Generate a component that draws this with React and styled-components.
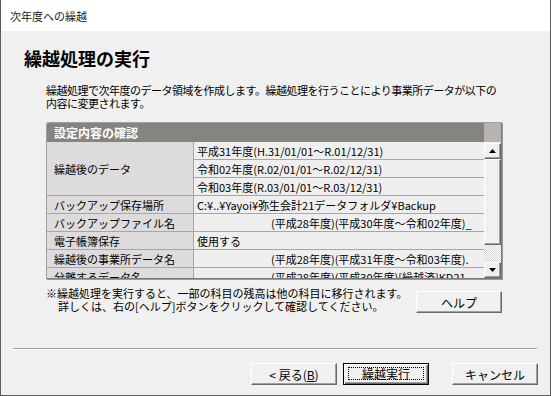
import React from 'react';
import styled, { createGlobalStyle } from 'styled-components';

const GlobalStyle = createGlobalStyle`
  html, body {
    margin: 0;
    padding: 0;
    background: #f0f0f0;
  }
  body {
    font-family: "Noto Sans CJK JP", "Noto Sans", sans-serif;
    color: #000;
    overflow: hidden;
  }
`;

const Window = styled.div`
  width: 551px;
  height: 396px;
  box-sizing: border-box;
  border: 1px solid #5c5c5c;
  border-top: none;
  background: #f0f0f0;
  display: flex;
  flex-direction: column;
`;

const TitleBar = styled.div`
  height: 31px;
  flex: none;
  background: #fff;
  display: flex;
  align-items: center;
  padding-left: 9px;
  font-size: 11px;
  color: #1a1a1a;
`;

const Heading = styled.h1`
  margin: 15px 0 0 23px;
  font-size: 18px;
  line-height: 24px;
  font-weight: bold;
`;

const Section = styled.div`
  margin-left: 45px;
  width: 456px;
`;

const Lead = styled.p`
  margin: 14px 0 0;
  font-size: 11px;
  line-height: 13px;
  letter-spacing: -0.5px;
  white-space: nowrap;
`;

const Frame = styled.div`
  margin-top: 12px;
  border: 1px solid #a0a0a0;
  border-right-color: #7c7c7c;
  border-bottom-color: #7c7c7c;
  border-top-left-radius: 3px;
  box-shadow: 1px 1px 0 #9a9a9a;
  overflow: hidden;
`;

const FrameHeader = styled.div`
  height: 19px;
  display: flex;
`;

const HeaderTitle = styled.div`
  flex: 1;
  background: #86847f;
  color: #fff;
  font-size: 12px;
  font-weight: bold;
  display: flex;
  align-items: center;
  padding-left: 7px;
`;

const HeaderCorner = styled.div`
  width: 17px;
  background: #b7b4af;
`;

const FrameBody = styled.div`
  height: 136px;
  display: flex;
  overflow: hidden;
`;

const Grid = styled.div`
  flex: 1;
  display: grid;
  grid-template-columns: 147px 1fr;
  grid-auto-rows: 18px;
  align-content: start;
  font-size: 11px;
`;

const LabelCell = styled.div`
  grid-row: span ${p => p.$span || 1};
  background: #dddbdb;
  border-right: 1px solid #a6a6a6;
  border-bottom: 1px solid #a6a6a6;
  display: flex;
  align-items: center;
  padding-left: 7px;
  white-space: nowrap;
`;

const ValueCell = styled.div`
  background: #efefef;
  border-bottom: 1px solid #a6a6a6;
  display: flex;
  align-items: center;
  padding-left: ${p => (p.$indent ? '77px' : '3px')};
  white-space: nowrap;
  overflow: hidden;
`;

const ScrollBar = styled.div`
  width: 17px;
  flex: none;
  display: flex;
  flex-direction: column;
  padding-top: 1px;
`;

const Raised = styled.div`
  box-sizing: border-box;
  background: #f0f0f0;
  border: 1px solid;
  border-color: #fff #696969 #696969 #fff;
  box-shadow: inset -1px -1px 0 #a0a0a0;
`;

const ScrollButton = styled(Raised)`
  height: 16px;
  display: flex;
  align-items: center;
  justify-content: center;
`;

const Thumb = styled(Raised)`
  height: 86px;
`;

const Track = styled.div`
  flex: 1;
  background-color: #fff;
  background-image: conic-gradient(#d6d6d6 25%, transparent 0 50%, #d6d6d6 0 75%, transparent 0);
  background-size: 2px 2px;
`;

const NotesRow = styled.div`
  margin-top: 8px;
  display: flex;
  justify-content: space-between;
  align-items: flex-start;
`;

const Notes = styled.p`
  margin: 0;
  font-size: 11px;
  line-height: 13px;
  white-space: nowrap;
`;

const Indent = styled.span`
  padding-left: 12px;
`;

const Button = styled.button`
  width: 86px;
  height: 22px;
  margin: ${p => p.$margin || '0'};
  box-sizing: border-box;
  padding: 0;
  background: #f0f0f0;
  border: 1px solid;
  border-color: #fff #696969 #696969 #fff;
  box-shadow: inset -1px -1px 0 #a0a0a0;
  font-family: "Noto Sans CJK JP", sans-serif;
  font-size: 12px;
  color: #000;
  display: flex;
  align-items: center;
  justify-content: center;
`;

const DefaultButton = styled(Button)`
  border: 1px solid #000;
  box-shadow: inset 1px 1px 0 #fff, inset -1px -1px 0 #696969, inset -2px -2px 0 #a0a0a0;
  padding: 3px 4px 4px 4px;
  align-items: stretch;
`;

const FocusRing = styled.span`
  flex: 1;
  border: 1px dotted #000;
  display: flex;
  align-items: center;
  justify-content: center;
`;

const Separator = styled.div`
  margin: 35px 0 0 12px;
  width: 524px;
  border-top: 1px solid #a0a0a0;
  border-bottom: 1px solid #fff;
`;

const ButtonRow = styled.div`
  margin-top: 13px;
  display: flex;
  justify-content: flex-end;
  padding-right: 12px;
`;

const Arrow = ({ down }) => (
  <svg width="7" height="4" viewBox="0 0 7 4">
    <path d={down ? 'M0 0H7L3.5 4Z' : 'M0 4H7L3.5 0Z'} fill="#000" />
  </svg>
);

const rows = [
  {
    label: '繰越後のデータ',
    values: [
      '平成31年度(H.31/01/01〜R.01/12/31)',
      '令和02年度(R.02/01/01〜R.02/12/31)',
      '令和03年度(R.03/01/01〜R.03/12/31)',
    ],
  },
  { label: 'バックアップ保存場所', values: ['C:¥..¥Yayoi¥弥生会計21データフォルダ¥Backup'] },
  { label: 'バックアップファイル名', values: ['(平成28年度)(平成30年度〜令和02年度)_'], indent: true },
  { label: '電子帳簿保存', values: ['使用する'] },
  { label: '繰越後の事業所データ名', values: ['(平成28年度)(平成31年度〜令和03年度).'], indent: true },
  { label: '分離するデータ名', values: ['(平成28年度)(平成30年度)[繰越済]KD21...'], indent: true },
];

export default function App() {
  return (
    <>
      <GlobalStyle />
      <Window>
        <TitleBar>次年度への繰越</TitleBar>
        <Heading>繰越処理の実行</Heading>
        <Section>
          <Lead>
            繰越処理で次年度のデータ領域を作成します。繰越処理を行うことにより事業所データが以下の
            <br />
            内容に変更されます。
          </Lead>
          <Frame>
            <FrameHeader>
              <HeaderTitle>設定内容の確認</HeaderTitle>
              <HeaderCorner />
            </FrameHeader>
            <FrameBody>
              <Grid>
                {rows.map(row => (
                  <React.Fragment key={row.label}>
                    <LabelCell $span={row.values.length}>{row.label}</LabelCell>
                    {row.values.map(v => (
                      <ValueCell key={v} $indent={row.indent}>{v}</ValueCell>
                    ))}
                  </React.Fragment>
                ))}
              </Grid>
              <ScrollBar>
                <ScrollButton><Arrow /></ScrollButton>
                <Thumb />
                <Track />
                <ScrollButton><Arrow down /></ScrollButton>
              </ScrollBar>
            </FrameBody>
          </Frame>
          <NotesRow>
            <Notes>
              ※繰越処理を実行すると、一部の科目の残高は他の科目に移行されます。
              <br />
              <Indent>詳しくは、右の[ヘルプ]ボタンをクリックして確認してください。</Indent>
            </Notes>
            <Button $margin="4px 0 0">ヘルプ</Button>
          </NotesRow>
        </Section>
        <Separator />
        <ButtonRow>
          <Button>&lt; 戻る(<u>B</u>)</Button>
          <DefaultButton $margin="0 0 0 6px">
            <FocusRing>繰越実行</FocusRing>
          </DefaultButton>
          <Button $margin="0 0 0 23px">キャンセル</Button>
        </ButtonRow>
      </Window>
    </>
  );
}
